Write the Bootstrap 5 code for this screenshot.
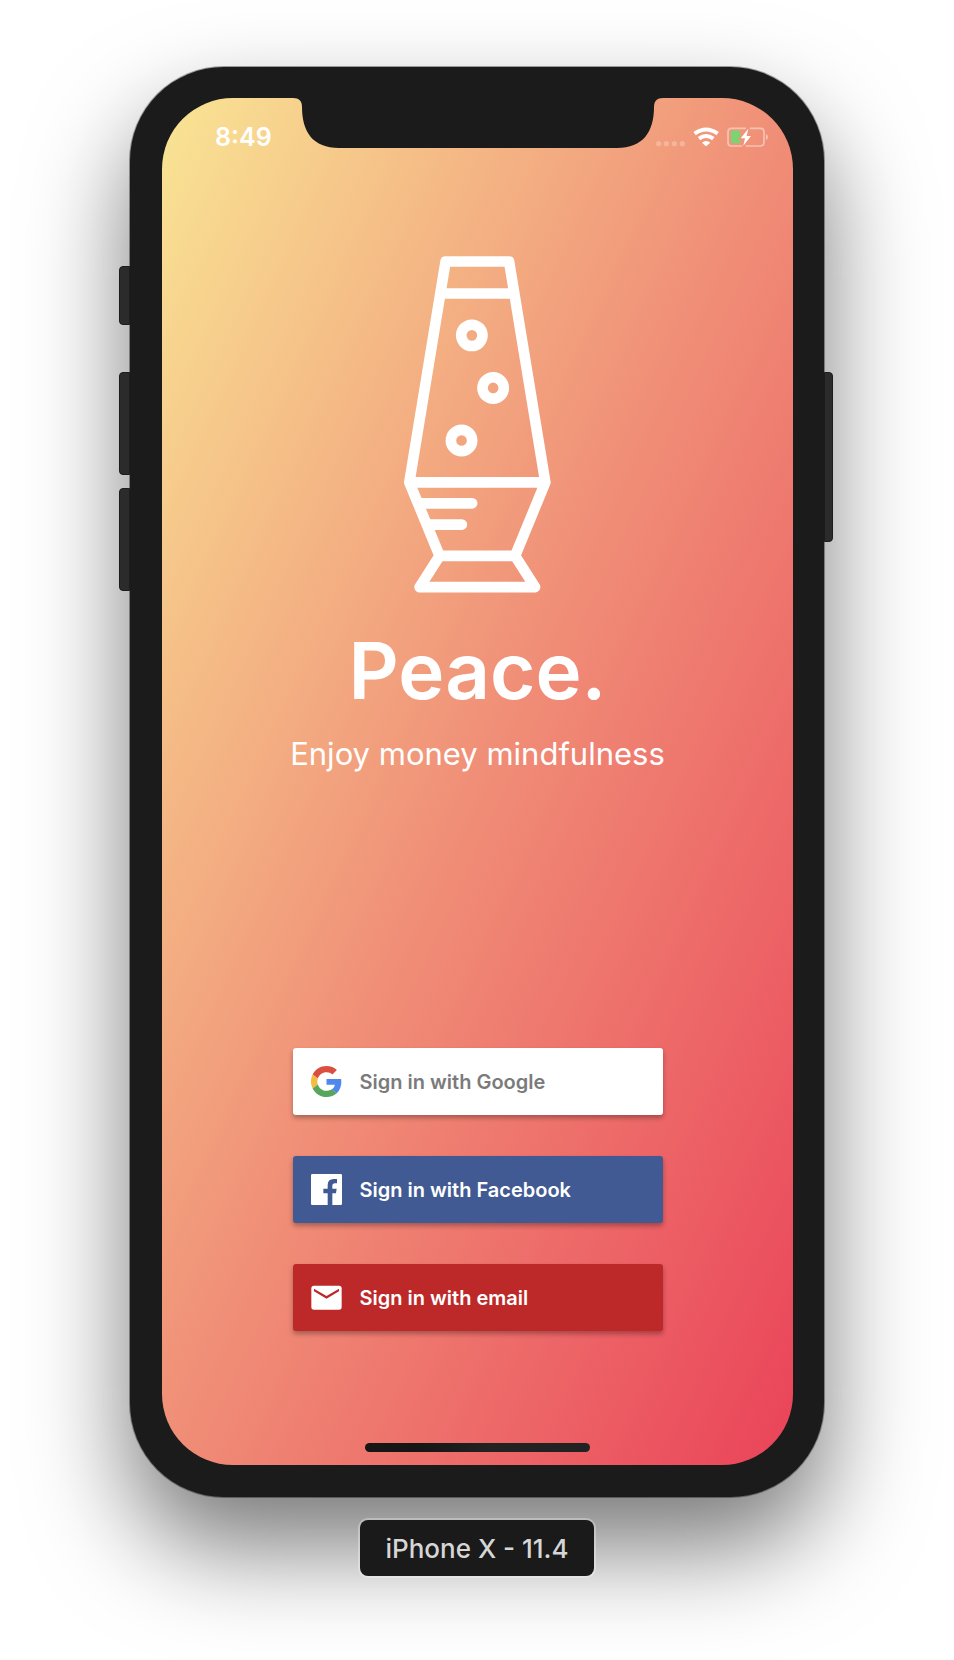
<!DOCTYPE html>
<html lang="en">
<head>
<meta charset="utf-8">
<meta name="viewport" content="width=device-width, initial-scale=1">
<title>Peace.</title>
<link href="https://cdn.jsdelivr.net/npm/bootstrap@5.3.0/dist/css/bootstrap.min.css" rel="stylesheet">
<style>
  body { font-family: Inter, "Liberation Sans", sans-serif; background: #fff; }
  .stage { padding: 67px 16px 84px; overflow: hidden; }

  /* Device body */
  .phone {
    max-width: 694px; padding: 31px 31px 32px 32px;
    background: #1b1b1b; border-radius: 94px;
    box-shadow: 0 0 0 1px rgba(0,0,0,.35), 0 50px 100px rgba(0,0,0,.53);
  }
  .side-key { position: absolute; width: 11px; background: #2b2b2b; border: 1px solid #1c1c1c; }
  .side-key.on-left { left: -11px; border-radius: 4px 0 0 4px; }
  .side-key.on-right { right: -9px; width: 9px; border-radius: 0 4px 4px 0; }
  .key-mute { top: 199px; height: 59px; }
  .key-up { top: 305px; height: 103px; }
  .key-down { top: 421px; height: 103px; }
  .key-power { top: 305px; height: 170px; }

  /* Screen */
  .screen {
    border-radius: 71px; padding-bottom: 13px; overflow: hidden;
    background: linear-gradient(to bottom right, #f9e594, #f08e77 50%, #ea4359);
  }
  .notch { position: absolute; top: 0; left: 50%; transform: translateX(-50%); }
  .status-bar { height: 78px; padding: 0 25px 0 53px; }
  .clock { font-size: 25px; line-height: 30px; font-weight: 600; }
  .lamp { margin-top: 80px; }
  .brand { font-size: 78px; line-height: 100px; font-weight: 600; margin: 28px 0 13px; }
  .tagline { font-size: 31px; line-height: 40px; margin: 0; }

  /* Sign-in buttons */
  .sign-in { max-width: 370px; gap: 41px; margin-top: 274px; }
  .btn-provider {
    --bs-btn-border-width: 0;
    --bs-btn-border-radius: 3px;
    height: 67px; padding: 0 18px; gap: 18px;
    font-size: 20px; line-height: 24px; font-weight: 600;
    box-shadow: 0 3px 5px rgba(0,0,0,.3);
  }
  .btn-google { --bs-btn-bg: #fff; --bs-btn-color: #7b7b7b; --bs-btn-hover-bg: #f4f4f4; --bs-btn-hover-color: #666; }
  .btn-facebook { --bs-btn-bg: #425a93; --bs-btn-color: #fff; --bs-btn-hover-bg: #384d80; --bs-btn-hover-color: #fff; }
  .btn-email { --bs-btn-bg: #bd2829; --bs-btn-color: #fff; --bs-btn-hover-bg: #a32223; --bs-btn-hover-color: #fff; }

  .home-bar { width: 225px; height: 9px; margin-top: 112px; background: linear-gradient(90deg, #161616 25%, #222 55%); }

  .device-label {
    margin-top: 23px; padding: 13px 25px 11px; border-radius: 8px;
    background: #1a1a1a; color: #d6d6d6; font-size: 26px; line-height: 32px; font-weight: 500;
    box-shadow: 0 0 0 2px rgba(255,255,255,.3);
  }
</style>
</head>
<body>
<main class="stage d-flex flex-column align-items-center">
  <div class="phone position-relative w-100">
    <span class="side-key on-left key-mute"></span>
    <span class="side-key on-left key-up"></span>
    <span class="side-key on-left key-down"></span>
    <span class="side-key on-right key-power"></span>

    <div class="screen position-relative d-flex flex-column align-items-center text-white text-center">
      <svg class="notch" width="370" height="51" viewBox="0 0 370 51" aria-hidden="true">
        <path fill="#1b1b1b" d="M0 0C6 0 9 3 9 9C9 34 20 50 46 50H324C350 50 361 34 361 9C361 3 364 0 370 0Z"/>
      </svg>

      <div class="status-bar w-100 d-flex align-items-center justify-content-between">
        <span class="clock">8:49</span>
        <svg width="112" height="20" viewBox="468 230 336 60" role="img" aria-label="Wi-Fi connected, battery charging">
          <g fill="#fff" fill-opacity=".25">
            <circle cx="476" cy="280" r="8"/><circle cx="499" cy="280" r="8"/><circle cx="523" cy="280" r="8"/><circle cx="547" cy="280" r="8"/>
          </g>
          <g fill="none" stroke="#fff" stroke-width="12">
            <path d="M584 250Q618 225 653 250"/>
            <path d="M597 265Q618 249 640 265"/>
          </g>
          <path fill="#fff" d="M606 277Q618 267 631 277L618 288Z"/>
          <path fill="none" stroke="#fff" stroke-opacity=".45" stroke-width="5" d="M738 234H695Q684 234 684 245V276Q684 287 695 287H727M749 234H781Q792 234 792 245V276Q792 287 781 287H737"/>
          <path fill="#fff" fill-opacity=".45" d="M798 251Q804 254 804 260T798 270Z"/>
          <path fill="#77d572" d="M697 241H721V259L713 265L721 272V279H697Q693 279 693 275V245Q693 241 697 241Z"/>
          <path fill="#fff" d="M745 235L722 264H735L730 286L753 257H740Z"/>
        </svg>
      </div>

      <svg class="lamp" width="147" height="337" viewBox="42 47 442 1012" aria-hidden="true" fill="none" stroke="#fff" stroke-width="32" stroke-linejoin="round" stroke-linecap="round">
        <path d="M167 63H358L467 727L376 948L436 1042H89L149 948L58 727Z"/>
        <path stroke-linecap="butt" d="M155 159H371M60 727H465M149 948H376"/>
        <path d="M90 790H247M120 854H216"/>
        <circle cx="246" cy="285" r="32"/><circle cx="310" cy="443" r="32"/><circle cx="215" cy="601" r="32"/>
      </svg>

      <h1 class="brand">Peace.</h1>
      <p class="tagline">Enjoy money mindfulness</p>

      <div class="sign-in w-100 d-flex flex-column">
        <button type="button" class="btn btn-provider btn-google d-flex align-items-center">
          <svg width="31" height="31" viewBox="0 0 48 48" aria-hidden="true">
            <path fill="#db4f40" d="M24 9.500c3.540 0 6.710 1.220 9.210 3.600l6.850-6.850C35.900 2.380 30.470 0 24 0 14.620 0 6.510 5.380 2.560 13.220l7.980 6.190C12.430 13.720 17.740 9.500 24 9.500z"/>
            <path fill="#5087ec" d="M46.980 24.550c0-1.570-.15-3.090-.38-4.550H24v9.020h12.940c-.58 2.960-2.260 5.480-4.780 7.180l7.730 6c4.510-4.180 7.090-10.360 7.090-17.650z"/>
            <path fill="#f2bd42" d="M10.530 28.590c-.48-1.450-.76-2.990-.76-4.590s.27-3.140.76-4.590l-7.980-6.190C.92 16.460 0 20.120 0 24c0 3.880.92 7.540 2.560 10.780l7.970-6.190z"/>
            <path fill="#58a55c" d="M24 48c6.480 0 11.930-2.130 15.890-5.810l-7.730-6c-2.150 1.450-4.920 2.300-8.160 2.300-6.260 0-11.570-4.220-13.470-9.910l-7.980 6.190C6.510 42.620 14.620 48 24 48z"/>
          </svg>
          Sign in with Google
        </button>
        <button type="button" class="btn btn-provider btn-facebook d-flex align-items-center">
          <svg width="31" height="31" viewBox="0 0 93 93" aria-hidden="true">
            <path fill="#fff" d="M4 0H89Q93 0 93 4V89Q93 93 89 93H64V58H75L77 44H64V36Q64 28 72 28H78V15H68Q50 15 50 33V44H37V58H50V93H4Q0 93 0 89V4Q0 0 4 0Z"/>
          </svg>
          Sign in with Facebook
        </button>
        <button type="button" class="btn btn-provider btn-email d-flex align-items-center">
          <svg width="31" height="31" viewBox="0 0 93 93" aria-hidden="true">
            <rect x="1" y="11" width="91" height="72" rx="8" fill="#fff"/>
            <path fill="#bd2829" d="M9 20L46.500 42L84 20V28L46.500 50L9 28Z"/>
          </svg>
          Sign in with email
        </button>
      </div>

      <div class="home-bar rounded-pill"></div>
    </div>
  </div>

  <div class="device-label position-relative">iPhone X - 11.4</div>
</main>
<script src="https://cdn.jsdelivr.net/npm/bootstrap@5.3.0/dist/js/bootstrap.bundle.min.js"></script>
</body>
</html>
